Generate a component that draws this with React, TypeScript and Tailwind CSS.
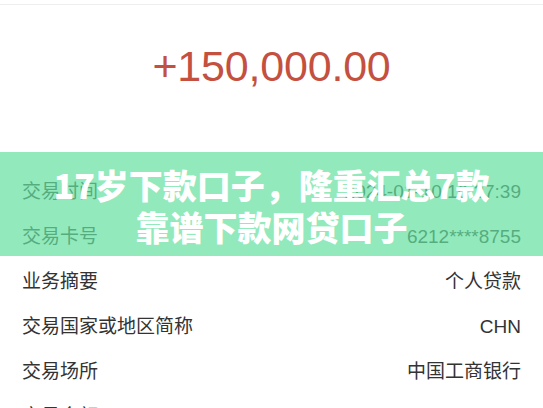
import React from 'react';

// 交易明细 行数据
const rows: { label: string; value: string }[] = [
  { label: '交易时间', value: '2024-01-10 10:27:39' },
  { label: '交易卡号', value: '6212****8755' },
  { label: '业务摘要', value: '个人贷款' },
  { label: '交易国家或地区简称', value: 'CHN' },
  { label: '交易场所', value: '中国工商银行' },
  { label: '交易金额', value: '150,000.00' },
];

const App: React.FC = () => {
  return (
    <div
      className="relative w-[543px] h-[408px] overflow-hidden bg-white text-[#333333]"
      style={{ fontFamily: '"Liberation Sans", "Noto Sans CJK SC", sans-serif' }}
    >
      {/* 상단 구분선 */}
      <div className="h-[4px]" />
      <div className="h-px bg-[#eeeeee]" />

      {/* 금액 */}
      <div className="h-[122px] flex items-center justify-center">
        <span className="text-[43px] leading-none text-[#c4503f] tracking-[-0.2px]">+150,000.00</span>
      </div>
      <div className="h-[43px]" />

      {/* 상세 행 */}
      <div className="flex flex-col">
        {rows.map((row) => (
          <div key={row.label} className="h-[45px] flex items-center justify-between px-[22px] text-[19px]">
            <span>{row.label}</span>
            <span>{row.value}</span>
          </div>
        ))}
      </div>

      {/* 제목 오버레이 */}
      <div className="absolute left-0 right-0 top-[152px] h-[104px] bg-[rgba(100,224,160,0.7)] flex flex-col items-center justify-center pt-[4px]">
        <p
          className="text-white text-[34px] font-black leading-[42px] text-center"
          style={{ fontFamily: '"Noto Sans CJK SC", sans-serif' }}
        >
          17岁下款口子，隆重汇总7款
        </p>
        <p
          className="text-white text-[34px] font-black leading-[42px] text-center"
          style={{ fontFamily: '"Noto Sans CJK SC", sans-serif' }}
        >
          靠谱下款网贷口子
        </p>
      </div>
    </div>
  );
};

export default App;
